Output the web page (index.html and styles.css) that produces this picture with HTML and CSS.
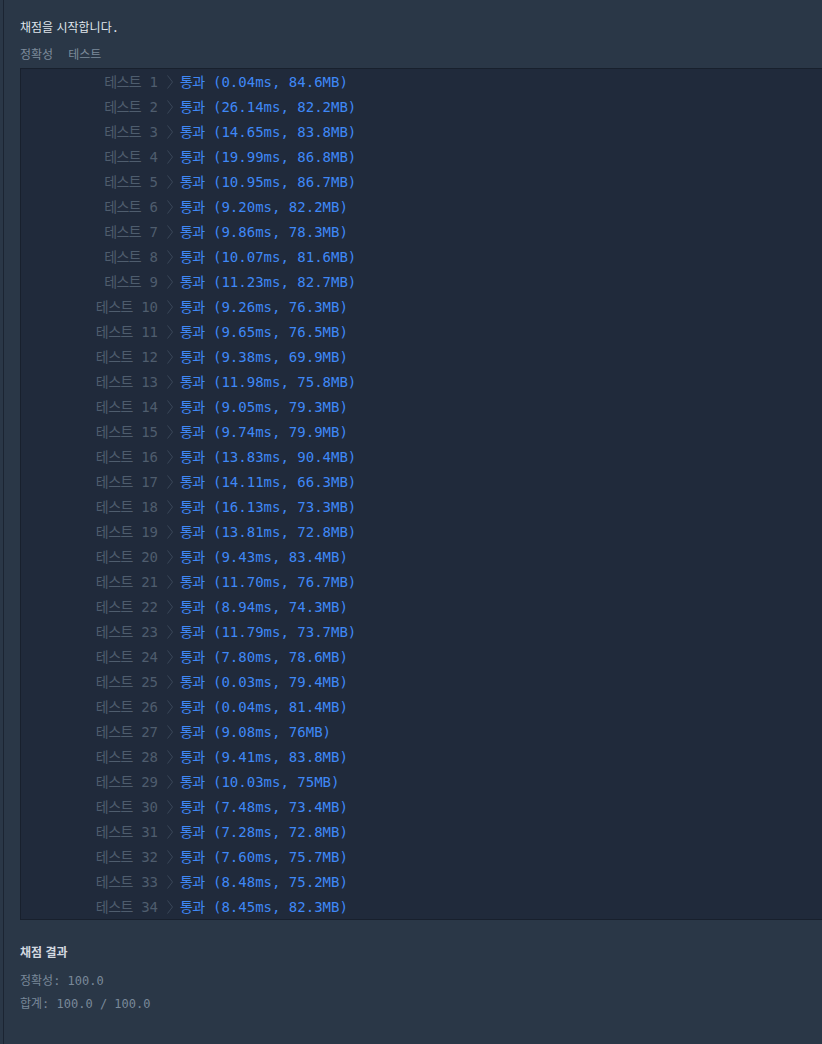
FILE: index.html
```html
<!DOCTYPE html>
<html lang="ko">
<head>
    <meta charset="UTF-8">
    <meta name="viewport" content="width=device-width, initial-scale=1.0">
    <title>채점 결과</title>
    <link rel="stylesheet" href="styles.css">
</head>
<body>
    <div class="console">
        <div class="console-title"><span class="ko">채점을 시작합니다</span>.</div>
        <div class="tabs">
            <span class="ko">정확성</span>
            <span class="ko">테스트</span>
        </div>

        <div class="result-box" id="resultBox"></div>

        <div class="summary">
            <div class="summary-title"><span class="ko">채점 결과</span></div>
            <div class="summary-line"><span class="ko">정확성</span>: 100.0</div>
            <div class="summary-line"><span class="ko">합계</span>: 100.0 / 100.0</div>
        </div>
    </div>

    <script>
        const results = [
            ['0.04ms', '84.6MB'], ['26.14ms', '82.2MB'], ['14.65ms', '83.8MB'], ['19.99ms', '86.8MB'],
            ['10.95ms', '86.7MB'], ['9.20ms', '82.2MB'], ['9.86ms', '78.3MB'], ['10.07ms', '81.6MB'],
            ['11.23ms', '82.7MB'], ['9.26ms', '76.3MB'], ['9.65ms', '76.5MB'], ['9.38ms', '69.9MB'],
            ['11.98ms', '75.8MB'], ['9.05ms', '79.3MB'], ['9.74ms', '79.9MB'], ['13.83ms', '90.4MB'],
            ['14.11ms', '66.3MB'], ['16.13ms', '73.3MB'], ['13.81ms', '72.8MB'], ['9.43ms', '83.4MB'],
            ['11.70ms', '76.7MB'], ['8.94ms', '74.3MB'], ['11.79ms', '73.7MB'], ['7.80ms', '78.6MB'],
            ['0.03ms', '79.4MB'], ['0.04ms', '81.4MB'], ['9.08ms', '76MB'], ['9.41ms', '83.8MB'],
            ['10.03ms', '75MB'], ['7.48ms', '73.4MB'], ['7.28ms', '72.8MB'], ['7.60ms', '75.7MB'],
            ['8.48ms', '75.2MB'], ['8.45ms', '82.3MB']
        ];

        const chevron = '<svg class="chevron" width="6" height="14" viewBox="0 0 6 14"><polyline points="0.5,0.5 5.5,7 0.5,13.5" fill="none" stroke="currentColor" stroke-width="1"/></svg>';

        const box = document.getElementById('resultBox');
        results.forEach(function(r, i) {
            const row = document.createElement('div');
            row.className = 'case-row';
            row.innerHTML =
                '<div class="case-name"><span class="ko">테스트</span> ' + (i + 1) + '</div>' +
                '<div class="case-arrow">' + chevron + '</div>' +
                '<div class="case-result"><span class="ko">통과</span> (' + r[0] + ', ' + r[1] + ')</div>';
            box.appendChild(row);
        });
    </script>
</body>
</html>
```

FILE: styles.css
```css
* {
    box-sizing: border-box;
    margin: 0;
    padding: 0;
}

body {
    background: #2a3747;
    font-family: "DejaVu Sans Mono", "Liberation Mono", "Noto Sans CJK KR", monospace;
    color: #d3d9e0;
    padding-left: 3px;
    overflow: hidden;
    height: 100vh;
}

.console {
    border-left: 1px solid #1b2432;
    padding: 18px 0 0 16px;
    height: 100%;
}

.ko {
    font-family: "Noto Sans CJK KR", sans-serif;
}

.console-title {
    font-size: 12px;
    line-height: 18px;
    color: #dfe4ea;
}

.tabs {
    margin-top: 8px;
    font-size: 12px;
    line-height: 18px;
    color: #7d8b9b;
    display: flex;
    gap: 15px;
}

.result-box {
    margin-top: 5px;
    background: #202a3b;
    border: 1px solid #18202d;
    border-right: none;
    font-size: 14px;
}

.case-row {
    display: flex;
    align-items: center;
    height: 25px;
    line-height: 20px;
    white-space: nowrap;
}

.case-row .ko {
    letter-spacing: -0.6px;
}

.case-name {
    width: 137px;
    text-align: right;
    color: #4f5d6e;
}

.case-arrow {
    width: 22px;
    padding-left: 9px;
    color: #3a4759;
}

.chevron {
    display: block;
}

.case-result {
    color: #3f88f6;
}

.summary {
    margin-top: 23px;
}

.summary-title {
    font-size: 12px;
    font-weight: 700;
    line-height: 18px;
    color: #d3d9e0;
    margin-bottom: 7px;
}

.summary-line {
    font-size: 12px;
    line-height: 22px;
    color: #798899;
}
```
